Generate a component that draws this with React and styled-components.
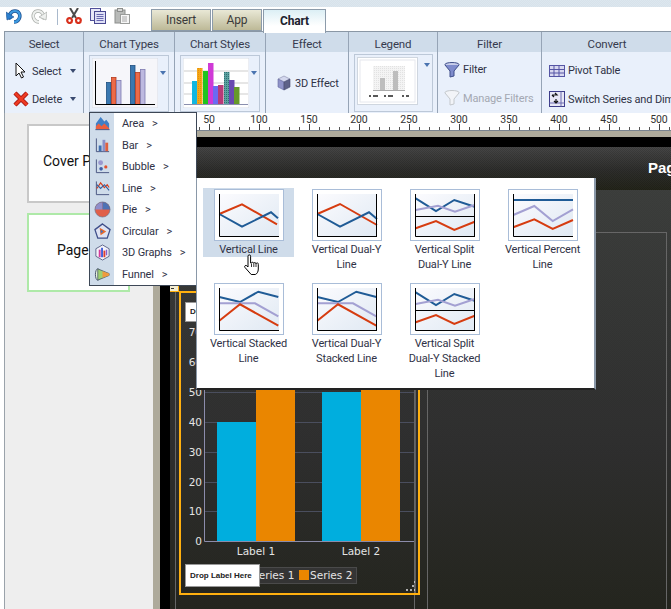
import React from 'react';
import styled, { createGlobalStyle, css } from 'styled-components';

const UI = `Roboto, "Noto Sans", "Liberation Sans", sans-serif`;
const dither = (a) => `repeating-conic-gradient(rgba(0,0,0,${a}) 0 25%, transparent 0 50%) 0 0/2px 2px`;

const GlobalStyle = createGlobalStyle`
  html, body { margin: 0; padding: 0; width: 671px; height: 609px; overflow: hidden; background: #fff; }
  * { box-sizing: border-box; }
`;

const Frame = styled.div`
  position: relative; width: 671px; height: 609px; overflow: hidden;
  display: flex; flex-direction: column; background: #fff;
  font: 11px/15px ${UI}; letter-spacing: -.15px; color: #2f3246;
`;
const TopStrip = styled.div`height: 7px; flex: none; background: ${dither(.02)}, #dce7ef;`;
const Toolbar = styled.div`height: 24px; flex: none; display: flex; align-items: flex-end; position: relative; z-index: 1;`;
const QuickActions = styled.div`
  width: 151px; height: 24px; flex: none; display: flex; align-items: flex-start;
  padding: 1px 0 0 6px;
`;
const QuickIcon = styled.svg`width: 16px; height: 16px; flex: none; margin-right: ${p => p.$gap}px; display: block;`;
const QuickSep = styled.span`width: 1px; height: 16px; background: #a9b9cc; margin: 1px 8px 0 0;`;
const Tab = styled.div`
  width: ${p => p.$w}px; height: ${p => p.$active ? 24 : 22}px; margin-right: 1px;
  margin-bottom: ${p => p.$active ? -2 : 0}px;
  display: flex; align-items: center; justify-content: center; font-size: 12px;
  border: 1px solid #8c9baa; border-bottom: ${p => p.$active ? 'none' : '1px solid #8c9baa'};
  ${p => p.$active ? css`
    background: linear-gradient(#dceff5, #fff 70%); font-weight: 700; color: #20222e;
  ` : css`
    background: linear-gradient(#e9e8d6, #bdb997); color: #3a3a3a;
  `}
`;

const Ribbon = styled.div`
  height: 82px; flex: none; margin-left: 4px; display: flex;
  border-top: 1px solid #8a97a5; border-left: 1px solid #8a97a5;
`;
const Group = styled.section`
  width: ${p => p.$w}px; flex: none; display: flex; flex-direction: column;
  border-right: ${p => p.$last ? 'none' : '1px solid #96a4b6'}; overflow: hidden;
`;
const GroupTitle = styled.div`
  height: 20px; flex: none; background: #cfdcea; text-align: center; line-height: 25px; font-size: 11.5px; color: #363a4e;
`;
const GroupBody = styled.div`
  flex: 1; background: #e9f0fb; display: flex;
  flex-direction: ${p => p.$row ? 'row' : 'column'};
  padding: ${p => p.$pad || '0'};
  align-items: ${p => p.$center ? 'center' : 'stretch'};
`;
const Action = styled.div`
  height: ${p => p.$h || 28}px; flex: none; display: flex; align-items: center; gap: ${p => p.$gap ?? 3}px; white-space: nowrap;
  color: ${p => p.$off ? '#a4a8b2' : 'inherit'};
`;
const ActionIcon = styled.svg`width: 16px; height: 16px; flex: none; display: block;`;
const Caret = styled.span`
  width: 0; height: 0; border: 3.5px solid transparent; border-top: 4px solid ${p => p.$c || '#3a4a70'}; border-bottom: 0; flex: none;
  margin-left: ${p => p.$ml || 'auto'}; margin-right: ${p => p.$mr || 0};
  margin-top: ${p => p.$mt || 0};
`;
const Gallery = styled.div`
  width: ${p => p.$w || 80}px; height: ${p => p.$h || 57}px; border: 1px solid #bcc8d8; padding: 2px;
  display: flex; align-items: flex-start;
`;
const GalleryThumb = styled.svg`display: block; width: ${p => p.$w}px; height: ${p => p.$h}px; flex: none;`;

const Workspace = styled.div`flex: 1; min-height: 0; display: flex;`;
const ThumbPanel = styled.aside`
  width: 149px; margin-left: 4px; flex: none; background: #eeeeee; border-left: 1px solid #9aa2aa;
  padding: 11px 0 0 22px; display: flex; flex-direction: column; gap: 10px;
`;
const SlideCard = styled.div`
  width: 103px; height: 79px; background: #fff; border: 2px solid ${p => p.$current ? '#aee9a8' : '#c8c8c8'};
  display: flex; align-items: center; justify-content: center; padding-bottom: 5px;
  font: 14px/18px Roboto, sans-serif; letter-spacing: 0; color: #111; white-space: nowrap;
`;
const Stage = styled.div`flex: 1; min-width: 0; display: flex; flex-direction: column;`;
const RulerSvg = styled.svg`display: block; flex: none; width: 518px; height: 18px; background: #fff;`;
const Canvas = styled.div`flex: 1; min-height: 0; background: #aeaa9b; padding: 6px 0 0 7px; display: flex;`;
const PageEdge = styled.div`flex: 1; min-width: 0; background: #000; padding: 10px 0 0 10px; display: flex;`;
const Page = styled.div`flex: 1; min-width: 0; display: flex; flex-direction: column; overflow: hidden;`;
const PageHeader = styled.header`
  height: 43px; flex: none; padding: 12px 0 0 478px; white-space: nowrap;
  font: 700 15px/18px "Liberation Sans", sans-serif; letter-spacing: 0; color: #fff;
  background: ${dither(.14)}, linear-gradient(#474747, #2e2e2c 55%, #24251a);
`;
const PageBody = styled.div`
  flex: 1; min-height: 0; padding: 42px 0 0 5px;
  display: grid; grid-template-columns: 240px 240px; column-gap: 12px;
  background: ${dither(.05)}, linear-gradient(#3d3f3d, #2f2f2f 62%, #25261f);
`;
const Panel = styled.div`
  border: 1px solid #666; border-bottom: none; min-height: 0;
`;
const ChartFrame = styled.div`
  position: relative; width: 241px; height: 304px; margin: 58px 0 0 3px; border: 2px solid #ffb00f;
`;
const ChartSvg = styled.svg`display: block; width: 237px; height: 300px;`;
const ChartHandle = styled.span`
  position: absolute; left: -15px; top: -8px; width: 13px; height: 7px; background: #f3ecd0; border: 1px solid #ffb00f;
  &::after { content: ''; position: absolute; left: 4px; top: 2px; width: 3px; height: 1px; background: #333; }
`;
const DropLabel = styled.div`
  position: absolute; left: ${p => p.$x}px; top: ${p => p.$y}px; width: ${p => p.$w}px; height: ${p => p.$h}px;
  background: #fff; border: 1px solid #999; padding-left: 4px; display: flex; align-items: center;
  font: 700 8px/10px "Liberation Sans", sans-serif; letter-spacing: 0; color: #222; white-space: nowrap; overflow: hidden;
`;

const Menu = styled.nav`
  position: absolute; left: 89px; top: 112px; width: 108px; height: 174px; background: #fff; border: 1px solid #3d4756;
  display: flex; flex-direction: column; z-index: 2;
`;
const MenuRow = styled.div`flex: 1; display: flex; align-items: center;`;
const MenuIconCell = styled.div`
  width: 24px; align-self: stretch; flex: none; background: #cfdcea; display: flex; align-items: center; justify-content: center;
`;
const MenuIcon = styled.svg`width: 17px; height: 17px; display: block;`;
const MenuText = styled.span`margin-left: 8px; white-space: nowrap;`;
const MenuMore = styled.span`margin-left: 8px;`;

const Flyout = styled.div`
  position: absolute; left: 196px; top: 178px; width: 400px; height: 212px; background: #fff; z-index: 3;
  border-left: 1px solid #8a98a8; border-right: 2px solid #8a98a8; border-bottom: 2px solid #222;
  padding: 10px 0 0 6px;
  display: grid; grid-template-columns: repeat(4, 91px); grid-auto-rows: 94px; column-gap: 7px; align-items: start;
`;
const TypeItem = styled.div`
  width: 91px; padding-top: 1px; display: flex; flex-direction: column; align-items: center;
  min-height: ${p => p.$hot ? 69 : 0}px; background: ${p => p.$hot ? '#cfdcea' : 'transparent'};
`;
const TypeThumb = styled.svg`display: block; width: 70px; height: 52px; flex: none; border: 1px solid #a9bdd8; background: #fff;`;
const TypeLabel = styled.div`margin-top: 1px; text-align: center; white-space: pre-line; line-height: 15px;`;
const HandCursor = styled.svg`position: absolute; left: 243px; top: 254px; width: 18px; height: 22px; z-index: 4;`;

const Line = ({ pts, c, w = 2 }) => <polyline points={pts} fill="none" stroke={c} strokeWidth={w} />;
const BLUE = '#1f5b96', RED = '#d63c10', LAV = '#a3a0d2';

const Thumb = ({ id, right, split, children }) => (
  <TypeThumb viewBox="0 0 68 50">
    <defs>
      <linearGradient id={id} x1="0" x2="1" y1="0" y2="1"><stop offset="0" stopColor="#fbfbfe" /><stop offset="1" stopColor="#e0e9f3" /></linearGradient>
    </defs>
    <rect x="4" y="4" width="60" height="43" fill={`url(#${id})`} />
    <g transform="translate(-1 -1)">{children}</g>
    <path d="M4.5 4V46.5H64" fill="none" stroke="#000" strokeWidth="1" />
    {right && <path d="M63.5 4V47" stroke="#000" strokeWidth="1" />}
    {split && <path d="M4 26.5H64" stroke="#000" strokeWidth="1" />}
  </TypeThumb>
);

const lineTypes = [
  { label: 'Vertical Line', hot: true, lines: [[RED, '5.3,25 28,15.3 63,35.3'], [BLUE, '5.3,25 28,37.7 57,23.3 64,29.3']] },
  { label: 'Vertical Dual-Y\nLine', right: true, lines: [[RED, '5.3,25 28,15 65,36'], [BLUE, '5.3,25 28,37.7 57,23.3 65,30']] },
  { label: 'Vertical Split\nDual-Y Line', right: true, split: true, lines: [[BLUE, '5.7,9.3 26,22 44.3,11 64.7,17.7'], [LAV, '5.7,21 28,16.7 45,22.7 64.7,16'], [RED, '5.7,39.3 26,32 44.3,41 64.7,32.7']] },
  { label: 'Vertical Percent\nLine', lines: [[BLUE, '5.3,11 65,11'], [LAV, '5.3,26 26.3,17 44.7,32 65,20.3'], [RED, '5.3,38.3 26.3,30.3 44.7,40 65,31']] },
  { label: 'Vertical Stacked\nLine', lines: [[BLUE, '5.3,14 26,19 44.3,8.7 64.3,14'], [LAV, '5.3,20.3 41,20.3 64.3,33.3'], [RED, '5.3,37.7 26,21.3 64.3,42.7']] },
  { label: 'Vertical Dual-Y\nStacked Line', right: true, lines: [[BLUE, '5.3,14 26,19 44.3,8.7 64.3,14'], [LAV, '5.3,20.3 41,20.3 64.3,33.3'], [RED, '5.3,37.7 26,21.3 64.3,42.7']] },
  { label: 'Vertical Split\nDual-Y Stacked\nLine', right: true, split: true, lines: [[BLUE, '5.7,9.3 26,22 44.3,11 64.7,17.7'], [LAV, '5.7,21 28,16.7 45,22.7 64.7,16'], [RED, '5.7,39.3 26,32 44.3,41 64.7,32.7']] },
];

const Axes = () => <path d="M2.5 1.5V15.5H16" fill="none" stroke="#46527e" strokeWidth="1" />;
const menuItems = [
  ['Area', <><path d="M2 15V9L7 2l4 5 2-2 3 4v6z" fill="#3f7fc6" /><path d="M2 15v-3l3-3 3 3 3-3 5 5v1z" fill="#ea5f3f" /><path d="M1.5 15.5H16.5" stroke="#46527e" /></>],
  ['Bar', <><Axes /><rect x="5" y="9" width="3" height="6" fill="#3f6fb0" /><rect x="9" y="3" width="3" height="12" fill="#8a8fc8" /><rect x="12" y="6" width="3" height="9" fill="#e0603f" /></>],
  ['Bubble', <><Axes /><circle cx="7" cy="5" r="2.6" fill="#9a98cf" /><circle cx="7.5" cy="11.5" r="1.9" fill="#3f5fa8" /><circle cx="12.5" cy="9.5" r="1.7" fill="#e0502f" /></>],
  ['Line', <><Axes /><Line pts="3,9 7,3 11,8 14,5 16,8" c="#d8401f" w="1.2" /><Line pts="3,5 7,9 11,5 16,11" c="#2f5fa0" w="1.2" /></>],
  ['Pie', <><circle cx="9" cy="9" r="8" fill="#e0604a" /><path d="M9 9V1a8 8 0 0 0-8 8z" fill="#8f8ecb" /><path d="M9 9V1a8 8 0 0 1 8 8z" fill="#4f72b4" /><circle cx="9" cy="9" r="8" fill="none" stroke="#6a7088" strokeWidth=".7" /></>],
  ['Circular', <><path d="M9 1l8 6-3 9H4L1 7z" fill="#dfe3f2" stroke="#3f4f8a" strokeWidth="1.4" /><path d="M6 5l7 4-6 4z" fill="#ec6a2a" /><path d="M7 7l3 2-3 2z" fill="#4f72b4" /></>],
  ['3D Graphs', <><path d="M9 1l7 4v8l-7 4-7-4V5z" fill="#f4f4fa" stroke="#5c6488" /><rect x="5" y="6" width="2" height="8" fill="#d43a9c" /><rect x="7.5" y="4" width="2" height="10" fill="#3f5fd8" /><rect x="10" y="7" width="2" height="7" fill="#e0402f" /><rect x="12.5" y="6" width="1.5" height="6" fill="#8a5fd0" /></>],
  ['Funnel', <><ellipse cx="4" cy="9" rx="2.5" ry="6" fill="#e6f2d8" stroke="#44506a" /><path d="M4 3L16 8v2L4 15z" fill="#9fd070" stroke="#44506a" strokeWidth=".8" /><path d="M9 5.5L16 8v2l-7 2.5z" fill="#ef9a3f" /></>],
];

const Ruler = () => {
  const ticks = [];
  for (let v = -5; v <= 510; v += 10) {
    const x = 159 + v + 5;
    ticks.push(<path key={`m${v}`} d={`M${x + .5} 127V130`} stroke="#555" />);
  }
  const major = [];
  for (let v = 50; v <= 500; v += 50) {
    const x = 159 + v;
    major.push(<path key={`t${v}`} d={`M${x + .5} 124V130`} stroke="#444" />);
    major.push(<text key={`l${v}`} x={x} y="123" textAnchor="middle" fontFamily={UI} fontSize="10.5" fill="#333">{v}</text>);
  }
  return (
    <RulerSvg viewBox="153 113 518 18">
      {ticks}{major}
      <path d="M153 130.5H671" stroke="#79838f" />
    </RulerSvg>
  );
};

const yTicks = [[541, '0'], [511, '10'], [482, '20'], [452, '30'], [422, '40'], [392, '50'], [362, '60'], [332, '70']];
const ChartText = ({ children, ...p }) => <text fontFamily='"DejaVu Sans", sans-serif' fontSize="10.5" letterSpacing="0" fill="#e4e4e4" {...p}>{children}</text>;

const BarChart = () => (
  <ChartSvg viewBox="181 293 237 300">
    <path d="M415.5 293V593" stroke="#5e5e5e" />
    {yTicks.slice(1).map(([y]) => <path key={y} d={`M204 ${y + .5}H414`} stroke="#4a4e5e" />)}
    <rect x="217" y="422" width="39" height="119" fill="#00aede" />
    <rect x="256" y="385" width="39" height="156" fill="#ea8600" />
    <rect x="322" y="392" width="39" height="149" fill="#00aede" />
    <rect x="361" y="385" width="39" height="156" fill="#ea8600" />
    <path d="M204.5 293V541.5H414" fill="none" stroke="#8c8cab" />
    {yTicks.map(([y, t]) => <ChartText key={t} x="202" y={y + 4} textAnchor="end">{t}</ChartText>)}
    <ChartText x="256" y="555" textAnchor="middle">Label 1</ChartText>
    <ChartText x="361" y="555" textAnchor="middle">Label 2</ChartText>
    <rect x="190.5" y="567.5" width="166" height="16" fill="#343434" stroke="#4a4a4a" />
    <rect x="240" y="570" width="8" height="10" fill="#00aede" />
    <ChartText x="252" y="579">Series 1</ChartText>
    <rect x="299" y="570" width="10" height="10" fill="#ea8600" />
    <ChartText x="310" y="579">Series 2</ChartText>
    <path d="M414 590h1M410 590h2M406 590h2M412 586h2M414 582h1" stroke="#ddd" strokeWidth="1.5" />
  </ChartSvg>
);

const BarsThumb = () => (
  <GalleryThumb $w={66} $h={50} viewBox="92 58 66 50">
    <rect x="92" y="58" width="66" height="50" fill="#f6f6fa" stroke="#d8dde6" />
    {[[106, 82, '#3b78b0', '#1e4f80'], [111, 77, '#ec6a48', '#b53a1c'], [116, 80, '#bdb9e0', '#7e7ab0'], [130, 65, '#3b78b0', '#1e4f80'], [135, 72, '#ec6a48', '#b53a1c'], [140, 69, '#bdb9e0', '#7e7ab0']].map(([x, y, f, s]) => (
      <rect key={`${x}`} x={x + .5} y={y + .5} width="4.5" height={104 - y} fill={f} stroke={s} strokeWidth=".8" />
    ))}
    <path d="M95.5 61V104.5H155" fill="none" stroke="#000" strokeWidth="1" />
  </GalleryThumb>
);

const StylesThumb = () => (
  <GalleryThumb $w={66} $h={50} viewBox="183 58 66 50">
    <defs>
      <pattern id="hatchO" width="2" height="2" patternUnits="userSpaceOnUse"><rect width="2" height="2" fill="#f4a818" /><rect width="1" height="1" fill="#e88a10" /></pattern>
      <pattern id="hatchT" width="2" height="2" patternUnits="userSpaceOnUse"><rect width="2" height="2" fill="#5aa0a0" /><rect width="1" height="1" fill="#2f7070" /></pattern>
    </defs>
    <rect x="183" y="58" width="66" height="50" fill="#fff" stroke="#d8dde6" />
    {[71, 83, 94].map(y => <path key={y} d={`M184 ${y}H248`} stroke="#e6e6e6" strokeWidth="2" />)}
    {[[192, 81, '#12b6e0'], [197, 68, 'url(#hatchO)'], [203, 71, '#1fc41f'], [208, 63, '#cf3ad6'], [213, 86, '#6a6af2'], [218, 85, '#b83a78'], [224, 72, 'url(#hatchT)'], [229, 80, '#6a4ab0'], [234, 87, '#669a2a']].map(([x, y, f]) => (
      <rect key={x} x={x} y={y} width="5.5" height={104 - y} fill={f} />
    ))}
    <path d="M184 104.5H248" stroke="#8a8fae" />
  </GalleryThumb>
);

const LegendThumb = () => (
  <GalleryThumb $w={61} $h={51} viewBox="357 57 61 51">
    <defs><pattern id="dots" width="2" height="2" patternUnits="userSpaceOnUse"><rect width="2" height="2" fill="#f4f4f4" /><rect width="1" height="1" fill="#e2e2e2" /></pattern></defs>
    <rect x="357.5" y="57.5" width="60" height="47" fill="#fff" stroke="#cfd6df" />
    <rect x="360" y="60" width="55" height="42" fill="#fff" stroke="#e6e8ee" />
    <rect x="373" y="66" width="32" height="24" fill="url(#dots)" />
    <rect x="380" y="78" width="5" height="12" fill="#bdbdbd" />
    <rect x="393" y="71" width="5" height="19" fill="#bdbdbd" />
    <path d="M373 90.5H405" stroke="#aaa" />
    <path d="M369 96h2M373 96h5M384 96h2M388 96h5M402 96h2M406 96h3" stroke="#222" strokeWidth="1.4" />
  </GalleryThumb>
);

const Funnel = ({ off }) => (
  <ActionIcon viewBox="0 0 16 16">
    <ellipse cx="8" cy="2.5" rx="7" ry="2" fill={off ? '#f2f4f8' : '#c7cdea'} stroke={off ? '#c4c8cc' : '#3f4f8a'} />
    <path d="M1 3l5 6v6l4-1V9l5-6" fill={off ? '#f2f4f8' : '#7f8ccc'} stroke={off ? '#c4c8cc' : '#3f4f8a'} />
  </ActionIcon>
);

export default function App() {
  return (
    <Frame>
      <GlobalStyle />
      <TopStrip />
      <Toolbar>
        <QuickActions>
          <QuickIcon $gap={9} viewBox="0 0 16 16"><path d="M5 11C2 7 5 3 9 3c4 0 6 4 4 8-1 2-3 3-5 3" fill="none" stroke="#1d4f8f" strokeWidth="3.6" /><path d="M5 11C2 7 5 3 9 3c4 0 6 4 4 8-1 2-3 3-5 3" fill="none" stroke="#3d9ae0" strokeWidth="2.2" /><path d="M0 4l1 8 7-3z" fill="#2a7fcf" stroke="#1d4f8f" strokeWidth=".6" /></QuickIcon>
          <QuickIcon $gap={10} viewBox="0 0 16 16"><path d="M11 11c3-4 0-8-4-8-4 0-6 4-4 8 1 2 3 3 5 3" fill="none" stroke="#a8aca8" strokeWidth="3.4" /><path d="M11 11c3-4 0-8-4-8-4 0-6 4-4 8 1 2 3 3 5 3" fill="none" stroke="#eef0ee" strokeWidth="2" /><path d="M16 4l-1 8-7-3z" fill="#eef0ee" stroke="#a8aca8" strokeWidth=".7" /></QuickIcon>
          <QuickSep />
          <QuickIcon $gap={8} viewBox="0 0 16 16"><path d="M4 0l6 10M12 0L6 10" stroke="#4a4a4a" strokeWidth="2" /><circle cx="3.6" cy="12.6" r="2.4" fill="none" stroke="#d8301c" strokeWidth="2.2" /><circle cx="12.4" cy="12.6" r="2.4" fill="none" stroke="#d8301c" strokeWidth="2.2" /></QuickIcon>
          <QuickIcon $gap={8} viewBox="0 0 16 16"><rect x=".5" y=".5" width="10" height="12" fill="#e8e8f8" stroke="#50509a" /><rect x="4.5" y="3.5" width="11" height="12" fill="#dfe0f6" stroke="#484890" /><path d="M6.5 6.5h7M6.5 8.5h7M6.5 10.5h7M6.5 12.5h7" stroke="#6868b0" /></QuickIcon>
          <QuickIcon $gap={0} viewBox="0 0 16 16"><rect x="1" y="2" width="10" height="13" fill="#b8bab8" stroke="#8c8e8c" /><rect x="3.5" y="0.5" width="5" height="3" fill="#d8d8d8" stroke="#8c8e8c" /><rect x="6.5" y="6.5" width="9" height="9" fill="#f6f6f6" stroke="#9a9c9a" /><path d="M8 9h5M8 11h5M8 13h5" stroke="#a8a8a8" /></QuickIcon>
        </QuickActions>
        <Tab $w={60}>Insert</Tab>
        <Tab $w={50}>App</Tab>
        <Tab $w={63} $active>Chart</Tab>
      </Toolbar>
      <Ribbon>
        <Group $w={79}>
          <GroupTitle>Select</GroupTitle>
          <GroupBody $pad="5px 0 0 8px">
            <Action>
              <ActionIcon viewBox="0 0 16 16"><path d="M3 0v13l3-3 2.5 5 2-1-2.5-5h4z" fill="#fff" stroke="#111" /></ActionIcon>
              Select<Caret $mr="7px" />
            </Action>
            <Action>
              <ActionIcon viewBox="0 0 16 16"><path d="M2 2l12 12M14 2L2 14" stroke="#a31410" strokeWidth="4.4" /><path d="M2 2l12 12M14 2L2 14" stroke="#ee3a22" strokeWidth="2.6" /></ActionIcon>
              Delete<Caret $mr="7px" />
            </Action>
          </GroupBody>
        </Group>
        <Group $w={91}>
          <GroupTitle>Chart Types</GroupTitle>
          <GroupBody $pad="3px 0 0 5px"><Gallery><BarsThumb /><Caret $ml="2px" $mt="13px" $c="#4a74b0" /></Gallery></GroupBody>
        </Group>
        <Group $w={91}>
          <GroupTitle>Chart Styles</GroupTitle>
          <GroupBody $pad="3px 0 0 5px"><Gallery><StylesThumb /><Caret $ml="2px" $mt="13px" $c="#4a74b0" /></Gallery></GroupBody>
        </Group>
        <Group $w={83}>
          <GroupTitle>Effect</GroupTitle>
          <GroupBody $row $center $pad="1px 0 0 10px">
            <Action $gap={3}>
              <ActionIcon viewBox="0 0 16 16"><path d="M8 1l6 3-6 3-6-3z" fill="#d4d8ee" stroke="#8488a8" strokeWidth=".6" /><path d="M2 4l6 3v8l-6-3z" fill="#8f93c8" stroke="#6468a0" strokeWidth=".6" /><path d="M14 4L8 7v8l6-3z" fill="#5e6288" stroke="#484c70" strokeWidth=".6" /></ActionIcon>
              3D Effect
            </Action>
          </GroupBody>
        </Group>
        <Group $w={89}>
          <GroupTitle>Legend</GroupTitle>
          <GroupBody $pad="2px 0 0 5px"><Gallery $w={79} $h={58}><LegendThumb /><Caret $ml="6px" $mt="6px" $c="#4a74b0" /></Gallery></GroupBody>
        </Group>
        <Group $w={104}>
          <GroupTitle>Filter</GroupTitle>
          <GroupBody $pad="3px 0 0 6px">
            <Action $gap={3} $h={29}><Funnel />Filter</Action>
            <Action $gap={3} $off><Funnel off />Manage Filters</Action>
          </GroupBody>
        </Group>
        <Group $w={130} $last>
          <GroupTitle>Convert</GroupTitle>
          <GroupBody $pad="4px 0 0 7px">
            <Action $gap={3} $h={29}>
              <ActionIcon viewBox="0 0 16 16"><rect x=".5" y="2.5" width="15" height="11" fill="#d8d8f0" stroke="#5555a5" /><path d="M.5 6.5h15M.5 10h15M5 2.5v11M10 2.5v11" stroke="#5555a5" /></ActionIcon>
              Pivot Table
            </Action>
            <Action $gap={3}>
              <ActionIcon viewBox="0 0 16 16"><rect x=".5" y=".5" width="15" height="15" fill="#e8e8f6" stroke="#3d3d8a" /><path d="M.5 12h15M12 .5v15" stroke="#6a6ab0" /><path d="M3 4h5l-2-2M3 4l2 2M7 8v4M5 10l2 2 2-2" fill="none" stroke="#111" strokeWidth="1.2" /></ActionIcon>
              Switch Series and Dimensions
            </Action>
          </GroupBody>
        </Group>
      </Ribbon>
      <Workspace>
        <ThumbPanel>
          <SlideCard>Cover Page</SlideCard>
          <SlideCard $current>Page 1</SlideCard>
        </ThumbPanel>
        <Stage>
          <Ruler />
          <Canvas>
            <PageEdge>
              <Page>
                <PageHeader>Page 1</PageHeader>
                <PageBody>
                  <Panel>
                    <ChartFrame>
                      <ChartHandle />
                      <BarChart />
                      <DropLabel $x={4} $y={9} $w={75} $h={20}>Drop Label Here</DropLabel>
                      <DropLabel $x={4} $y={271} $w={75} $h={23}>Drop Label Here</DropLabel>
                    </ChartFrame>
                  </Panel>
                  <Panel />
                </PageBody>
              </Page>
            </PageEdge>
          </Canvas>
        </Stage>
      </Workspace>
      <Menu>
        {menuItems.map(([label, icon]) => (
          <MenuRow key={label}>
            <MenuIconCell><MenuIcon viewBox="0 0 18 18">{icon}</MenuIcon></MenuIconCell>
            <MenuText>{label}</MenuText><MenuMore>&gt;</MenuMore>
          </MenuRow>
        ))}
      </Menu>
      <Flyout>
        {lineTypes.map((t, i) => (
          <TypeItem key={t.label} $hot={t.hot}>
            <Thumb id={`tg${i}`} right={t.right} split={t.split}>
              {t.lines.map(([c, pts]) => <Line key={c} c={c} pts={pts} />)}
            </Thumb>
            <TypeLabel>{t.label}</TypeLabel>
          </TypeItem>
        ))}
      </Flyout>
      <HandCursor viewBox="0 0 18 22">
        <path d="M5 2.2a1.3 1.3 0 0 1 2.6 0V9h.8a1.2 1.2 0 0 1 2.3.3 1.2 1.2 0 0 1 2.3.5 1.2 1.2 0 0 1 2.3.7V15c0 3-1.5 5-3 5.5H8.2L2 13.5a1.2 1.2 0 0 1 1.8-1.7L5 13z" fill="#fff" stroke="#000" strokeWidth="1" />
        <path d="M8.5 9.5V13M10.8 9.5V13M13 10V13" stroke="#000" strokeWidth=".8" />
      </HandCursor>
    </Frame>
  );
}
